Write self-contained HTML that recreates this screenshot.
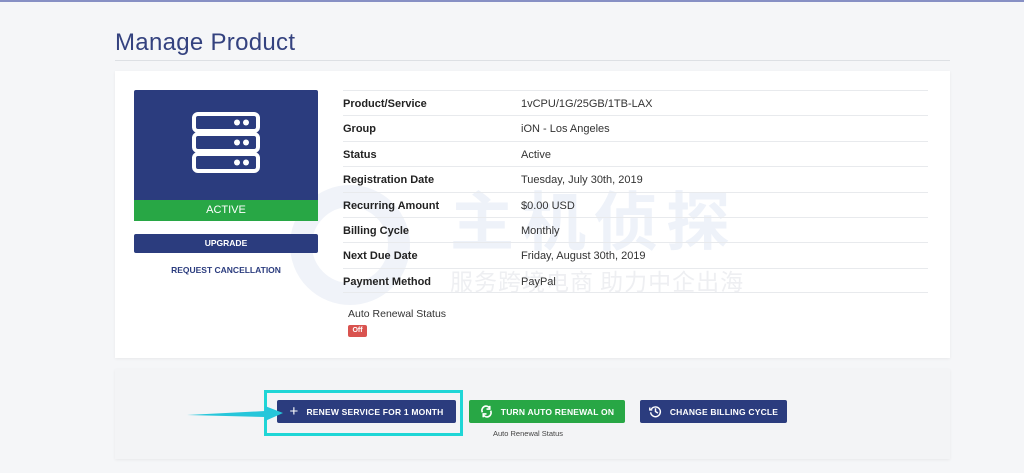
<!DOCTYPE html>
<html><head><meta charset="utf-8"><style>
*{margin:0;padding:0;box-sizing:border-box}
body{width:1024px;height:473px;background:#f5f6f8;font-family:"Liberation Sans",sans-serif;position:relative;overflow:hidden;color:#222}
.a{position:absolute}
.top{left:0;top:0;width:1024px;height:2px;background:#8790c4}
h1{position:absolute;left:115px;top:29px;font-weight:normal;font-size:24px;color:#34427f;letter-spacing:0.3px}
.hr{left:115px;top:60px;width:835px;height:1px;background:#dde0e4}
.card{background:#fff;box-shadow:0 1px 3px rgba(0,0,0,.06)}
.row{position:absolute;left:343px;width:585px;height:25px;border-top:1px solid #e8eaed;font-size:11px}
.row b{position:absolute;left:0;top:7px;font-weight:bold;color:#222}
.row span{position:absolute;left:178px;top:7px;color:#333}
.btn{position:absolute;top:400px;height:23px;color:#fff;font-size:8.5px;font-weight:bold;border-radius:2px;display:flex;align-items:center;justify-content:center;gap:8px;letter-spacing:.2px}
</style></head><body>
<div class="a top"></div>
<h1>Manage Product</h1>
<div class="a hr"></div>
<div class="a card" style="left:115px;top:71px;width:835px;height:287px"></div>
<!-- watermark -->
<div class="a" style="left:450px;top:172px;font-size:64px;color:#eef2f9;font-family:'Noto Sans CJK SC',sans-serif;font-weight:bold;letter-spacing:8px">主机侦探</div>
<div class="a" style="left:450px;top:263px;font-size:23px;color:#eeeff2;font-family:'Noto Sans CJK SC',sans-serif;letter-spacing:1px">服务跨境电商 助力中企出海</div>
<div class="a" style="left:290px;top:185px;width:120px;height:120px;border-radius:50%;border:22px solid #f0f3f9"></div>
<div class="a" style="left:134px;top:90px;width:184px;height:110px;background:#2b3c7e;border-radius:2px 2px 0 0"></div>
<svg class="a" style="left:191px;top:111px" width="70" height="64" viewBox="0 0 70 64" fill="none" stroke="#fff" stroke-width="4">
<rect x="3" y="3" width="64" height="17" rx="4"/><rect x="3" y="23" width="64" height="17" rx="4"/><rect x="3" y="43" width="64" height="17" rx="4"/>
<g fill="#fff" stroke="none"><circle cx="46" cy="11.5" r="3"/><circle cx="55" cy="11.5" r="3"/><circle cx="46" cy="31.5" r="3"/><circle cx="55" cy="31.5" r="3"/><circle cx="46" cy="51.5" r="3"/><circle cx="55" cy="51.5" r="3"/></g></svg>
<div class="a" style="left:134px;top:200px;width:184px;height:21px;background:#28a745;color:#fff;font-size:11px;text-align:center;line-height:21px">ACTIVE</div>
<div class="a" style="left:134px;top:234px;width:184px;height:19px;background:#2b3c7e;color:#fff;font-size:8.5px;font-weight:bold;text-align:center;line-height:19px;border-radius:2px">UPGRADE</div>
<div class="a" style="left:134px;top:265px;width:184px;color:#2b3c7e;font-size:8.5px;font-weight:bold;text-align:center">REQUEST CANCELLATION</div>
<div class="row" style="top:90px"><b>Product/Service</b><span>1vCPU/1G/25GB/1TB-LAX</span></div>
<div class="row" style="top:115px"><b>Group</b><span>iON - Los Angeles</span></div>
<div class="row" style="top:141px"><b>Status</b><span>Active</span></div>
<div class="row" style="top:166px"><b>Registration Date</b><span>Tuesday, July 30th, 2019</span></div>
<div class="row" style="top:192px"><b>Recurring Amount</b><span>$0.00 USD</span></div>
<div class="row" style="top:217px"><b>Billing Cycle</b><span>Monthly</span></div>
<div class="row" style="top:242px"><b>Next Due Date</b><span>Friday, August 30th, 2019</span></div>
<div class="row" style="top:268px;border-bottom:1px solid #e8eaed"><b>Payment Method</b><span>PayPal</span></div>
<div class="a" style="left:348px;top:308px;font-size:10.5px;color:#333">Auto Renewal Status</div>
<div class="a" style="left:348px;top:325px;width:19px;height:12px;background:#d9534f;color:#fff;font-size:7px;font-weight:bold;text-align:center;line-height:12px;border-radius:2px">Off</div>
<div class="a card" style="left:115px;top:369px;width:835px;height:90px;background:#f3f4f6"></div>
<div class="btn" style="left:277px;width:179px;background:#2b3c7e"><span style="font-size:15px;font-weight:normal">+</span>RENEW SERVICE FOR 1 MONTH</div>
<div class="btn" style="left:469px;width:156px;background:#28a745"><svg width="13" height="13" viewBox="0 0 16 16" fill="none" stroke="#fff" stroke-width="2"><path d="M3 9a5 5 0 0 1 9-5M13 7a5 5 0 0 1-9 5"/><path d="M12 1v4H8M4 15v-4h4"/></svg>TURN AUTO RENEWAL ON</div>
<div class="btn" style="left:640px;width:147px;background:#2b3c7e"><svg width="13" height="13" viewBox="0 0 16 16" fill="none" stroke="#fff" stroke-width="1.8"><path d="M3 5a6 6 0 1 1-1 4"/><path d="M1 3v3h3"/><path d="M8 4v4l3 2"/></svg>CHANGE BILLING CYCLE</div>
<div class="a" style="left:493px;top:429px;font-size:7.5px;color:#444">Auto Renewal Status</div>
<div class="a" style="left:264px;top:390px;width:199px;height:46px;border:3px solid #1fd6d6"></div>
<svg class="a" style="left:185px;top:404px" width="100" height="20"><polygon points="2,11 80,7 80,2 98,9 80,17 80,13" fill="#26c6da"/></svg>
</body></html>
